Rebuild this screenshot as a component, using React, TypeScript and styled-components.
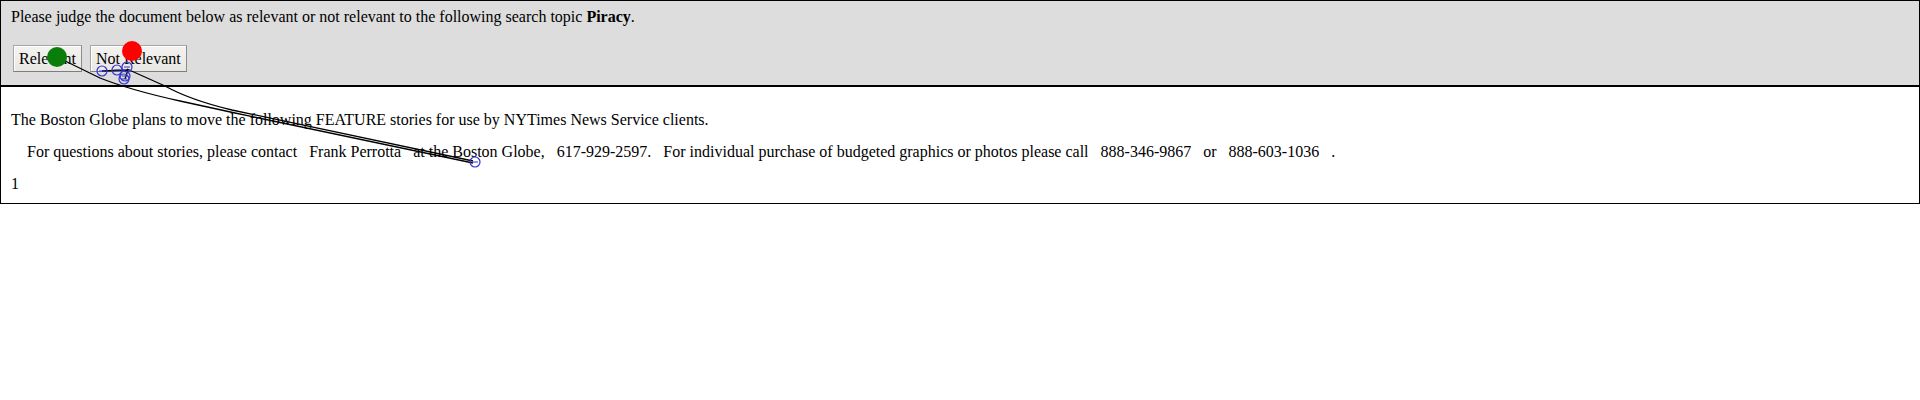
import React from 'react';
import styled, { createGlobalStyle } from 'styled-components';

const GlobalStyle = createGlobalStyle`
  body {
    margin: 0;
    background: #fff;
    font-family: "Liberation Serif", "Times New Roman", serif;
    font-size: 16px;
    color: #000;
  }
`;

interface Point {
  x: number;
  y: number;
}

const clicks: Point[] = [
  { x: 102, y: 71 },
  { x: 117, y: 70 },
  { x: 127, y: 67 },
  { x: 125, y: 76 },
  { x: 124, y: 79 },
  { x: 475, y: 162 },
];

const App = () => {
  return (
    <Page>
      <GlobalStyle />
      <Prompt>
        <Question>
          Please judge the document below as relevant or not relevant to the following search topic{' '}
          <b>Piracy</b>.
        </Question>
        <Actions>
          <JudgeButton type="button">Relevant</JudgeButton>
          <JudgeButton type="button">Not Relevant</JudgeButton>
        </Actions>
      </Prompt>
      <Doc>
        <Para>The Boston Globe plans to move the following FEATURE stories for use by NYTimes News Service clients.</Para>
        <Para>
          {'    For questions about stories, please contact   Frank Perrotta   at the Boston Globe,   617-929-2597.   For individual purchase of budgeted graphics or photos please call   888-346-9867   or   888-603-1036   .'}
        </Para>
        <Para>1</Para>
      </Doc>
      <Trace width="1920" height="400" viewBox="0 0 1920 400">
        <path
          d="M57,57 L100,78 Q130,90 180,101 L235,113 L473,163"
          fill="none"
          stroke="#000"
          strokeWidth="1.3"
        />
        <path
          d="M127,69 Q147,78 165,86 Q190,100 232,110 L473,161"
          fill="none"
          stroke="#000"
          strokeWidth="1.3"
        />
        <path d="M102,71 L128,70 L125,79" fill="none" stroke="#000" strokeWidth="1.3" />
        <circle cx="57" cy="57" r="10" fill="#0a7d0a" />
        <circle cx="132" cy="51" r="10" fill="#ff0000" />
        {clicks.map((p, i) => (
          <g key={i}>
            <circle cx={p.x} cy={p.y} r="5" fill="none" stroke="#3434d0" strokeWidth="1.2" />
            <line x1={p.x - 3} y1={p.y} x2={p.x + 3} y2={p.y} stroke="#3434d0" strokeWidth="1" />
          </g>
        ))}
      </Trace>
    </Page>
  );
};

export default App;

const Page = styled.div`
  position: relative;
  width: 1920px;
  height: 400px;
`;

const Prompt = styled.div`
  background-color: #dddddd;
  border: 1px solid #000;
  padding: 7px 10px 13px;
`;

const Question = styled.div`
  line-height: 18.4px;
  margin-bottom: 18.6px;
`;

const Actions = styled.div`
  display: flex;
  gap: 8px;
  padding-left: 2px;
`;

const JudgeButton = styled.button`
  height: 27px;
  padding: 0 5px;
  font-family: "Liberation Serif", "Times New Roman", serif;
  font-size: 16px;
  color: #000;
  background: linear-gradient(#f4f3f0, #e9e7e3);
  border: 1px solid #a6a6a6;
  border-bottom-color: #7d7d7d;
  border-right-color: #8d8d8d;
  border-radius: 0;
  box-shadow: inset 1px 1px 0 #fff;
`;

const Doc = styled.div`
  border: 1px solid #000;
  padding: 24px 10px 10px;
`;

const Para = styled.p`
  margin: 0 0 14px;
  line-height: 18px;
  white-space: pre;

  &:last-child {
    margin-bottom: 0;
  }
`;

const Trace = styled.svg`
  position: absolute;
  top: 0;
  left: 0;
  pointer-events: none;
`;
